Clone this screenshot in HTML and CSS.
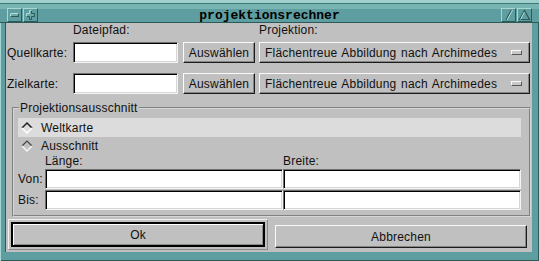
FILE: index.html
```html
<!DOCTYPE html>
<html>
<head>
  <meta charset="UTF-8">
  <title>projektionsrechner</title>
  <link rel="stylesheet" href="styles.css">
</head>
<body>
  <div class="window">
    <div class="titlebar">
      <span class="tb-btn">
        <svg width="13" height="12" viewBox="0 0 13 12"><rect x="2.5" y="4.5" width="8" height="3" fill="#6aa8a6" stroke="#2c5a58"/><path d="M2.5 7.5V4.5H10.5" fill="none" stroke="#b4e0dc"/></svg>
      </span>
      <span class="tb-btn">
        <svg width="13" height="12" viewBox="0 0 13 12"><path d="M5.5 1.5h2v3h3v3h-3v3h-2v-3h-3v-3h3z" fill="#6aa8a6" stroke="#2c5a58"/><path d="M2.5 7.5v-3h3v-3h2" fill="none" stroke="#b4e0dc"/></svg>
      </span>
      <div class="title">projektionsrechner</div>
      <span class="tb-btn">
        <svg width="13" height="12" viewBox="0 0 13 12"><path d="M4 11L9.5 1" stroke="#2c5a58" stroke-width="1.4"/><path d="M5 11L10.5 1" stroke="#b4e0dc"/></svg>
      </span>
      <span class="tb-btn">
        <svg width="13" height="12" viewBox="0 0 13 12"><path d="M6.5 1.5L11.5 10.5H1.5Z" fill="none" stroke="#2c5a58" stroke-width="1.2"/><path d="M2.5 10.5L6.5 3" stroke="#b4e0dc"/></svg>
      </span>
    </div>

    <div class="dialog">
      <div class="row row-head">
        <span></span>
        <span>Dateipfad:</span>
        <span></span>
        <span>Projektion:</span>
      </div>
      <div class="row">
        <label class="label">Quellkarte:</label>
        <div class="entry"></div>
        <div class="btn">Auswählen</div>
        <div class="option">Flächentreue Abbildung nach Archimedes<span class="indicator"></span></div>
      </div>
      <div class="row row-next">
        <label class="label">Zielkarte:</label>
        <div class="entry"></div>
        <div class="btn">Auswählen</div>
        <div class="option">Flächentreue Abbildung nach Archimedes<span class="indicator"></span></div>
      </div>

      <fieldset class="group">
        <legend>Projektionsausschnitt</legend>
        <div class="radio active">
          <svg class="diamond" width="12" height="12" viewBox="0 0 12 12"><path d="M1 6L6 1L11 6" fill="none" stroke="#222" stroke-width="1.5"/><path d="M1 6L6 11L11 6" fill="none" stroke="#fff" stroke-width="1.5"/></svg>
          Weltkarte
        </div>
        <div class="radio">
          <svg class="diamond" width="12" height="12" viewBox="0 0 12 12"><path d="M1 6L6 1L11 6" fill="none" stroke="#444" stroke-width="1.2"/><path d="M1 6L6 11L11 6" fill="none" stroke="#f4f4f4" stroke-width="1.5"/></svg>
          Ausschnitt
        </div>
        <div class="coords">
          <span></span>
          <span class="head">Länge:</span>
          <span class="head">Breite:</span>
          <label class="label">Von:</label>
          <div class="entry"></div>
          <div class="entry"></div>
          <label class="label">Bis:</label>
          <div class="entry"></div>
          <div class="entry"></div>
        </div>
      </fieldset>

      <div class="actions">
        <div class="default-ring">
          <div class="btn btn-default">Ok</div>
        </div>
        <div class="btn btn-cancel">Abbrechen</div>
      </div>
    </div>
  </div>
</body>
</html>
```

FILE: styles.css
```css
body {
  margin: 0;
  font-family: "Liberation Sans", Arial, sans-serif;
  font-size: 12px;
  letter-spacing: 0.2px;
  word-spacing: 1px;
  color: #111;
}
.window {
  width: 539px;
  height: 261px;
  box-sizing: border-box;
  padding: 0 7px 9px 6px;
  background: #5f9ea0;
  display: flex;
  flex-direction: column;
  box-shadow: inset 1px 1px 0 #a9d6d2, inset -1px -1px 0 #2c5a58;
}

/* title bar */
.titlebar {
  height: 23px;
  margin: 0 -7px 0 -6px;
  padding: 0 7px 0 7px;
  display: flex;
  align-items: flex-start;
  gap: 1px;
  background: linear-gradient(to bottom, #9fd0cc 0 3px, #3e7876 3px 4px, #78b4b1 4px 9px, #5f9ea0 9px 22px, #2c5a58 22px 23px);
}
.tb-btn {
  width: 15px;
  height: 14px;
  margin-top: 8px;
  box-sizing: border-box;
  border: 1px solid;
  border-color: #a9d8d4 #2c5a58 #2c5a58 #a9d8d4;
  background: #5f9ea0;
  display: flex;
  align-items: center;
  justify-content: center;
}
.title {
  flex: 1;
  margin-top: 9px;
  text-align: center;
  font-family: "Liberation Mono", monospace;
  font-weight: bold;
  font-size: 13px;
  line-height: 13px;
  letter-spacing: 0;
  color: #000;
}

/* dialog body */
.dialog {
  flex: 1;
  background: #c0c0c0;
  display: flex;
  flex-direction: column;
  box-shadow: -1px 0 0 #2c5a58;
}
.row {
  display: grid;
  grid-template-columns: 67px 110px 76px 271px;
  align-items: center;
  justify-items: start;
  height: 21px;
  margin-top: 5px;
}
.row-head {
  height: 14px;
  line-height: 14px;
  margin-top: 0;
}
.row-next {
  margin-top: 10px;
}
.label {
  padding-left: 1px;
}
.entry {
  background: #fff;
  box-sizing: border-box;
  height: 21px;
  width: 105px;
  border: 1px solid;
  border-color: #6e6e6e #f4f4f4 #f4f4f4 #6e6e6e;
  box-shadow: inset 1px 1px 0 #000, inset -1px -1px 0 #d6d6d6;
}
.btn {
  box-sizing: border-box;
  height: 21px;
  width: 72px;
  border: 1px solid;
  border-color: #fafafa #1c1c1c #1c1c1c #fafafa;
  box-shadow: inset -1px -1px 0 #858585;
  display: flex;
  align-items: center;
  justify-content: center;
}
.option {
  box-sizing: border-box;
  height: 21px;
  width: 271px;
  padding: 0 7px 0 5px;
  border: 1px solid;
  border-color: #fafafa #1c1c1c #1c1c1c #fafafa;
  box-shadow: inset -1px -1px 0 #858585;
  display: flex;
  align-items: center;
  justify-content: space-between;
}
.indicator {
  width: 11px;
  height: 5px;
  box-sizing: border-box;
  border: 1px solid;
  border-color: #fafafa #555 #555 #fafafa;
  background: #c8c8c8;
}

/* Projektionsausschnitt */
.group {
  margin: 7px 1px 0 6px;
  padding: 0 8px 5px 4px;
  border: 2px groove #d6d6d6;
  min-width: 0;
}
.group legend {
  padding: 0 1px;
  margin-left: 1px;
  line-height: 14px;
}
.radio {
  height: 17px;
  display: flex;
  align-items: center;
  padding-left: 3px;
  gap: 8px;
}
.radio.active {
  height: 19px;
  margin-top: 3px;
  background: #dcdcdc;
}
.diamond {
  flex: none;
}
.coords {
  display: grid;
  grid-template-columns: 27px 238px 238px;
  grid-template-rows: 14px 20px 20px;
  row-gap: 1px;
  align-items: center;
}
.coords .head {
  line-height: 14px;
  align-self: start;
}
.coords .label {
  padding-left: 0;
}
.coords .entry {
  width: auto;
  height: 20px;
}

/* buttons at the bottom */
.actions {
  display: flex;
  align-items: flex-start;
  margin-top: 2px;
}
.default-ring {
  margin-left: 2px;
  padding: 2px;
  border: 1px solid;
  border-color: #f0f0f0 #8a8a8a #8a8a8a #f0f0f0;
}
.btn-default {
  width: 254px;
  height: 25px;
  border: 2px solid #000;
  box-shadow: inset 1px 1px 0 #fff, inset -1px -1px 0 #8a8a8a;
}
.btn-cancel {
  width: 252px;
  height: 23px;
  margin: 6px 0 0 7px;
}
```
